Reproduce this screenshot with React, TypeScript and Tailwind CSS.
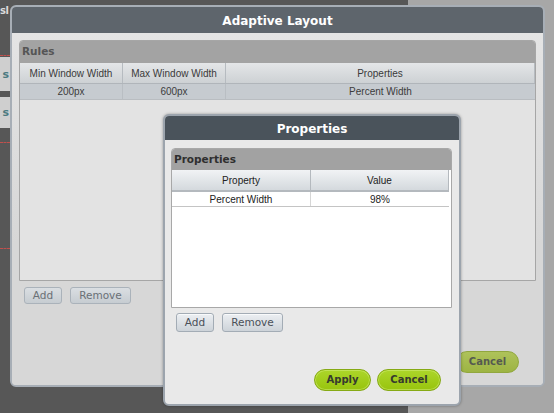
import React from 'react';

const tableFont = "font-['Liberation_Sans',Arial,sans-serif]";
const uiFont = "font-['DejaVu_Sans',Verdana,sans-serif]";

function GrayButton({ label, width, dim }: { label: string; width: string; dim?: boolean }) {
  return (
    <button
      className={`${uiFont} ${width} h-full rounded-[3px] border text-[10.5px] leading-none ${
        dim
          ? 'border-[#aab2ba] bg-[linear-gradient(#dadee2,#c6ccd1)] text-[#6a7076]'
          : 'border-[#a3acb5] bg-[linear-gradient(#eceff2,#cdd3d9)] text-[#4a5058] shadow-[inset_0_1px_0_rgba(255,255,255,0.7)]'
      }`}
    >
      {label}
    </button>
  );
}

function GreenButton({ label, width, dim }: { label: string; width: string; dim?: boolean }) {
  return (
    <button
      className={`${uiFont} ${width} h-[22px] rounded-full border font-bold text-[10px] leading-none ${
        dim
          ? 'border-[#91a73e] bg-[linear-gradient(#aec25a,#9db443)] text-[#555a50]'
          : 'border-[#86aa14] bg-[linear-gradient(#acd62a,#98c40e)] text-[#363a2e] shadow-[inset_0_0_0_1px_rgba(220,245,140,0.45)]'
      }`}
    >
      {label}
    </button>
  );
}

function OuterDialog() {
  return (
    <div className="absolute left-[10px] top-[5px] w-[535px] h-[382px] rounded-[6px] border-2 border-[#a7aeb6] bg-[#d7d7d7] flex flex-col overflow-hidden">
      <div className={`${uiFont} h-[26px] shrink-0 bg-[#5e656c] flex items-center justify-center pt-[2px] text-white font-bold text-[12px]`}>
        Adaptive Layout
      </div>
      <div className="flex-1 flex flex-col bg-[linear-gradient(#e4e4e4,#d7d7d7_60%)] px-[7px] pt-[7px] pb-[12px]">
        {/* Rules panel */}
        <div className="h-[241px] flex flex-col border border-[#a6a6a6] rounded-t-[4px] bg-[#e3e3e3]">
          <div className={`${uiFont} h-[22px] shrink-0 bg-[#a3a3a3] rounded-t-[3px] flex items-center pl-[2px] text-[10.5px] font-bold text-[#555]`}>
            Rules
          </div>
          <div className={`${tableFont} h-[21px] shrink-0 flex text-[10px] text-[#3a3a3a] bg-[linear-gradient(#e4e6e8,#cdd1d4)] border-b border-[#b0b5ba]`}>
            <div className="w-[103px] flex items-center justify-center border-r border-[#b6bbc0]">Min Window Width</div>
            <div className="w-[103px] flex items-center justify-center border-r border-[#b6bbc0]">Max Window Width</div>
            <div className="flex-1 flex items-center justify-center border-r border-[#b6bbc0]">Properties</div>
          </div>
          <div className={`${tableFont} h-[16px] shrink-0 flex text-[10px] text-[#3c3c3c] bg-[#c6cbd0] border-b border-[#b9bdc1]`}>
            <div className="w-[103px] flex items-center justify-center border-r border-[#b9bec3]">200px</div>
            <div className="w-[103px] flex items-center justify-center border-r border-[#b9bec3]">600px</div>
            <div className="flex-1 flex items-center justify-center">Percent Width</div>
          </div>
          <div className="flex-1" />
        </div>
        <div className="mt-[6px] h-[17px] flex gap-[8px] pl-[5px]">
          <GrayButton label="Add" width="w-[38px]" dim />
          <GrayButton label="Remove" width="w-[61px]" dim />
        </div>
        <div className="flex-1" />
        <div className="flex justify-end pr-[17px]">
          <GreenButton label="Cancel" width="w-[63px]" dim />
        </div>
      </div>
    </div>
  );
}

function InnerDialog() {
  return (
    <div className="absolute left-[163px] top-[114px] w-[298px] h-[292px] rounded-[6px] border-2 border-[#9ca4ad] bg-[#e9e9e9] flex flex-col overflow-hidden shadow-[0_0_3px_rgba(0,0,0,0.35)]">
      <div className={`${uiFont} h-[24px] shrink-0 bg-[#4a535b] flex items-center justify-center pt-[2px] text-white font-bold text-[12px]`}>
        Properties
      </div>
      <div className="flex-1 flex flex-col pl-[6px] pr-[7px] pt-[8px] pb-[13px]">
        <div className="h-[160px] flex flex-col border border-[#a8a8a8] rounded-t-[4px] bg-white">
          <div className={`${uiFont} h-[21px] shrink-0 bg-[#a2a2a2] rounded-t-[3px] flex items-center pl-[2px] text-[10.5px] font-bold text-[#2f2f2f]`}>
            Properties
          </div>
          <div className="h-[22px] shrink-0 flex pr-[2px]">
            <div className={`${tableFont} flex-1 flex text-[10px] text-[#222] bg-[linear-gradient(#f1f3f5,#d4d9dd)] border-b-2 border-[#b4b9be]`}>
              <div className="w-[139px] flex items-center justify-center border-r border-[#b4b9be]">Property</div>
              <div className="flex-1 flex items-center justify-center border-r border-[#b4b9be]">Value</div>
            </div>
          </div>
          <div className="h-[15px] shrink-0 flex pr-[2px]">
            <div className={`${tableFont} flex-1 flex text-[10px] text-[#222] border-b border-[#c4c4c4]`}>
              <div className="w-[139px] flex items-center justify-center border-r border-[#d6d6d6]">Percent Width</div>
              <div className="flex-1 flex items-center justify-center">98%</div>
            </div>
          </div>
          <div className="flex-1" />
        </div>
        <div className="mt-[5px] h-[19px] flex gap-[8px] pl-[5px]">
          <GrayButton label="Add" width="w-[38px]" />
          <GrayButton label="Remove" width="w-[61px]" />
        </div>
        <div className="flex-1" />
        <div className="flex justify-end gap-[6px] pr-[11px]">
          <GreenButton label="Apply" width="w-[57px]" />
          <GreenButton label="Cancel" width="w-[64px]" />
        </div>
      </div>
    </div>
  );
}

export default function App() {
  return (
    <div className="relative w-[554px] h-[413px] overflow-hidden flex bg-[#a7a7a7]">
      {/* app behind the dialogs */}
      <div className="w-[408px] h-full bg-[#575757] flex">
        <div className={`${uiFont} w-[10px] flex flex-col overflow-hidden`}>
          <div className="h-[55px] pt-[6px] text-[10px] font-bold leading-none tracking-[-0.5px] text-[#dcdcdc] whitespace-nowrap">sl</div>
          <div className="h-[2px] border-t border-dashed border-[#c0504d]" />
          <div className="h-[34px] bg-[#cfcfcf] flex items-center justify-end pr-[1px] text-[11px] font-bold text-[#4b7a80] leading-none">s</div>
          <div className="h-[6px]" />
          <div className="h-[31px] bg-[#cfcfcf] flex items-center justify-end pr-[1px] text-[11px] font-bold text-[#4b7a80] leading-none">s</div>
          <div className="h-[14px]" />
          <div className="h-[1px] border-t border-dashed border-[#c0504d]" />
          <div className="h-[105px]" />
          <div className="h-[1px] border-t border-dashed border-[#c0504d]" />
        </div>
      </div>
      <OuterDialog />
      <InnerDialog />
    </div>
  );
}
